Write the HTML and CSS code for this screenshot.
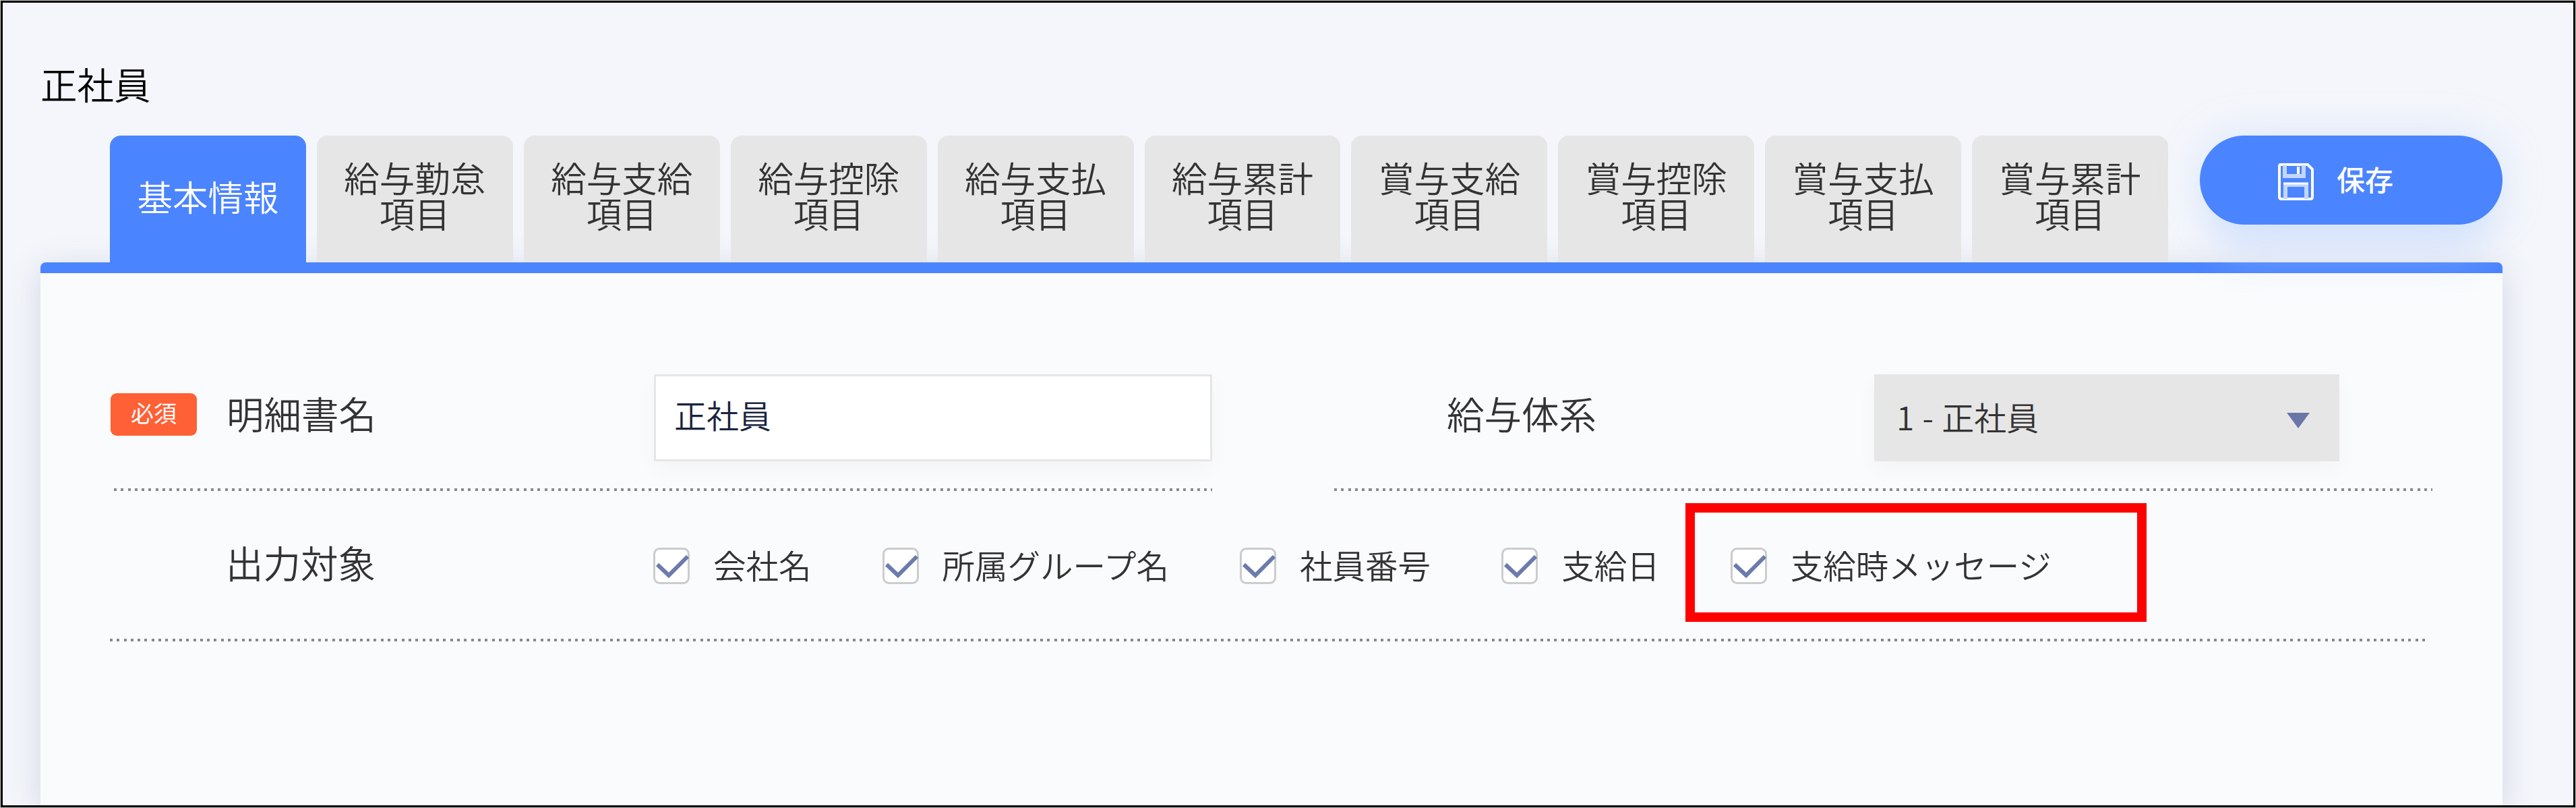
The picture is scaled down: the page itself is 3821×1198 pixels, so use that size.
FILE: index.html
```html
<!DOCTYPE html>
<html lang="ja">
<head>
  <meta charset="UTF-8" />
  <meta name="viewport" content="width=device-width, initial-scale=1.0" />
  <title>正社員</title>
  <link rel="stylesheet" href="styles.css">
</head>
<body>
  <div class="frame">
    <h1 class="page-title">正社員</h1>

    <div class="toolbar">
      <nav class="tabs">
        <a class="tab active">基本情報</a>
        <a class="tab">給与勤怠<br>項目</a>
        <a class="tab">給与支給<br>項目</a>
        <a class="tab">給与控除<br>項目</a>
        <a class="tab">給与支払<br>項目</a>
        <a class="tab">給与累計<br>項目</a>
        <a class="tab">賞与支給<br>項目</a>
        <a class="tab">賞与控除<br>項目</a>
        <a class="tab">賞与支払<br>項目</a>
        <a class="tab">賞与累計<br>項目</a>
      </nav>
      <button class="save-button">
        <svg class="save-icon" viewBox="0 0 53 55" preserveAspectRatio="none">
          <path d="M4 2H44L51 9V50Q51 53 48 53H5Q2 53 2 50V5Q2 2 4 2Z" fill="none" stroke="#fff" stroke-width="4" />
          <path d="M10 3V19H38V3" fill="none" stroke="#c3d6ff" stroke-width="6" />
          <path d="M30 5V16" stroke="#fff" stroke-width="4" />
          <path d="M11 53V32H42V53" fill="none" stroke="#c3d6ff" stroke-width="6" />
          <path d="M8 30H45" stroke="#fff" stroke-width="3" />
        </svg>
        <span class="save-text">保存</span>
      </button>
    </div>

    <div class="card">
      <div class="row">
        <div class="field">
          <span class="badge">必須</span>
          <label class="label">明細書名</label>
          <input class="text-input" type="text" value="正社員" />
        </div>
        <div class="field field-right">
          <label class="label">給与体系</label>
          <div class="select">
            <span class="select-text">1 - 正社員</span>
            <i class="arrow"></i>
          </div>
        </div>
      </div>

      <div class="row-full">
        <span class="label">出力対象</span>
        <div class="checks">
          <label class="check"><svg class="box" viewBox="0 0 54 54"><rect x="1.5" y="1.5" width="51" height="51" rx="8" /><path d="M6 25L23 41L51 13" /></svg><span class="check-text">会社名</span></label>
          <label class="check"><svg class="box" viewBox="0 0 54 54"><rect x="1.5" y="1.5" width="51" height="51" rx="8" /><path d="M6 25L23 41L51 13" /></svg><span class="check-text">所属グループ名</span></label>
          <label class="check"><svg class="box" viewBox="0 0 54 54"><rect x="1.5" y="1.5" width="51" height="51" rx="8" /><path d="M6 25L23 41L51 13" /></svg><span class="check-text">社員番号</span></label>
          <label class="check"><svg class="box" viewBox="0 0 54 54"><rect x="1.5" y="1.5" width="51" height="51" rx="8" /><path d="M6 25L23 41L51 13" /></svg><span class="check-text">支給日</span></label>
          <label class="check marked"><svg class="box" viewBox="0 0 54 54"><rect x="1.5" y="1.5" width="51" height="51" rx="8" /><path d="M6 25L23 41L51 13" /></svg><span class="check-text">支給時メッセージ</span></label>
        </div>
      </div>
    </div>
  </div>
</body>
</html>
```
FILE: styles.css
```css
*, *::before, *::after {
  box-sizing: border-box;
}

html, body {
  margin: 0;
  padding: 0;
  height: 100%;
  overflow: hidden;
  background: #ccc;
  font-family: "Noto Sans CJK JP", sans-serif;
  font-weight: 350;
  color: #333;
}

body {
  padding: 1px;
}

.frame {
  width: 3819px;
  height: 1196px;
  border: 3px solid #000;
  background: #f4f6fb;
  padding: 87px 105px 0 56px;
  overflow: hidden;
  display: flex;
  flex-direction: column;
}

.page-title {
  margin: 0;
  height: 110px;
  font-size: 54.5px;
  line-height: 66px;
  font-weight: 350;
  color: #000;
}

.toolbar {
  display: flex;
  align-items: flex-start;
  justify-content: space-between;
  height: 188px;
  padding-left: 103px;
  flex-shrink: 0;
  position: relative;
}

.tabs {
  display: flex;
  gap: 16px;
  width: 3053px;
  height: 188px;
}

.tab {
  flex: 1 1 0;
  display: flex;
  align-items: center;
  justify-content: center;
  padding: 0 0 12px 0;
  background: #e6e6e6;
  border-radius: 16px 16px 0 0;
  font-size: 52.5px;
  line-height: 53px;
  text-align: center;
}

.tab.active {
  padding-bottom: 9px;
  background: #4b84ff;
  color: #fff;
}

.save-button {
  display: flex;
  align-items: center;
  width: 449px;
  height: 132px;
  padding: 4px 0 0 116px;
  gap: 34px;
  border: none;
  border-radius: 66px;
  background: #4b84ff;
  box-shadow: 0 0 60px rgba(165, 200, 255, 0.35), 0 62px 50px -14px rgba(195, 218, 255, 0.42);
  color: #fff;
  font-family: inherit;
  font-size: 42px;
  font-weight: 500;
  position: relative;
  z-index: 2;
}

.save-text {
  padding-bottom: 9px;
}

.save-icon {
  width: 53px;
  height: 55px;
}

.card {
  flex: 1;
  border-top: 16px solid #4b84ff;
  border-radius: 8px 8px 0 0;
  background: #f9fbfd;
  box-shadow: 0 10px 50px rgba(60, 80, 130, 0.18);
  padding: 150px 104px 0 103px;
}

.row {
  display: flex;
  justify-content: space-between;
  padding-left: 6px;
}

.field {
  display: flex;
  align-items: center;
  position: relative;
  width: 1629px;
  height: 173px;
  padding: 0 0 44px 169px;
}

.field-right {
  padding-left: 167px;
}

/* dotted line under each row */
.field::after, .row-full::after {
  content: "";
  position: absolute;
  left: 0;
  right: 0;
  bottom: 0;
  height: 4px;
  background: repeating-linear-gradient(90deg, #8a8a8a 0 4px, transparent 4px 10.3px);
}

.row-full::after {
  right: 6px;
}

.badge {
  width: 128px;
  height: 63px;
  margin: 0 44px 10px -174px;
  border-radius: 9px;
  background: #ff6035;
  color: #fff;
  font-size: 34px;
  font-weight: 400;
  line-height: 57px;
  text-align: center;
}

.label {
  width: 634px;
  font-size: 55.5px;
  line-height: 60px;
  padding-bottom: 16px;
}

.text-input {
  width: 828px;
  height: 129px;
  padding: 0 27px 11px;
  border: 3px solid #e6e6e6;
  background: #fff;
  box-shadow: 0 12px 30px rgba(0, 0, 0, 0.03);
  font-family: inherit;
  font-size: 48px;
  font-weight: 350;
  color: #1a2340;
}

.select {
  display: flex;
  align-items: center;
  justify-content: space-between;
  width: 690px;
  height: 129px;
  padding: 0 44px 0 33px;
  background: #e6e6e6;
  box-shadow: 0 12px 30px rgba(0, 0, 0, 0.03);
  font-size: 48px;
  word-spacing: 1.5px;
}

.select-text {
  padding-bottom: 6px;
}

.arrow {
  margin-top: 7px;
  border: 17px solid transparent;
  border-top: 23px solid #6b76a8;
  border-bottom: 0;
}

.row-full {
  display: flex;
  align-items: center;
  position: relative;
  height: 223px;
  padding: 0 0 2px 172px;
}

.row-full .label {
  padding-bottom: 12px;
}

.checks {
  display: flex;
  gap: 105px;
}

.check {
  display: flex;
  align-items: center;
  gap: 35px;
  font-size: 48.5px;
  line-height: 60px;
  white-space: nowrap;
  position: relative;
}

.check-text {
  padding-bottom: 4px;
}

.box {
  width: 54px;
  height: 54px;
}

.box rect {
  fill: #fff;
  stroke: #ccc;
  stroke-width: 3;
}

.box path {
  fill: none;
  stroke: #6b7bab;
  stroke-width: 6;
}

.marked::after {
  content: "";
  position: absolute;
  left: -67px;
  top: -61px;
  width: 684px;
  height: 176px;
  border: 14px solid #f00;
}
```
